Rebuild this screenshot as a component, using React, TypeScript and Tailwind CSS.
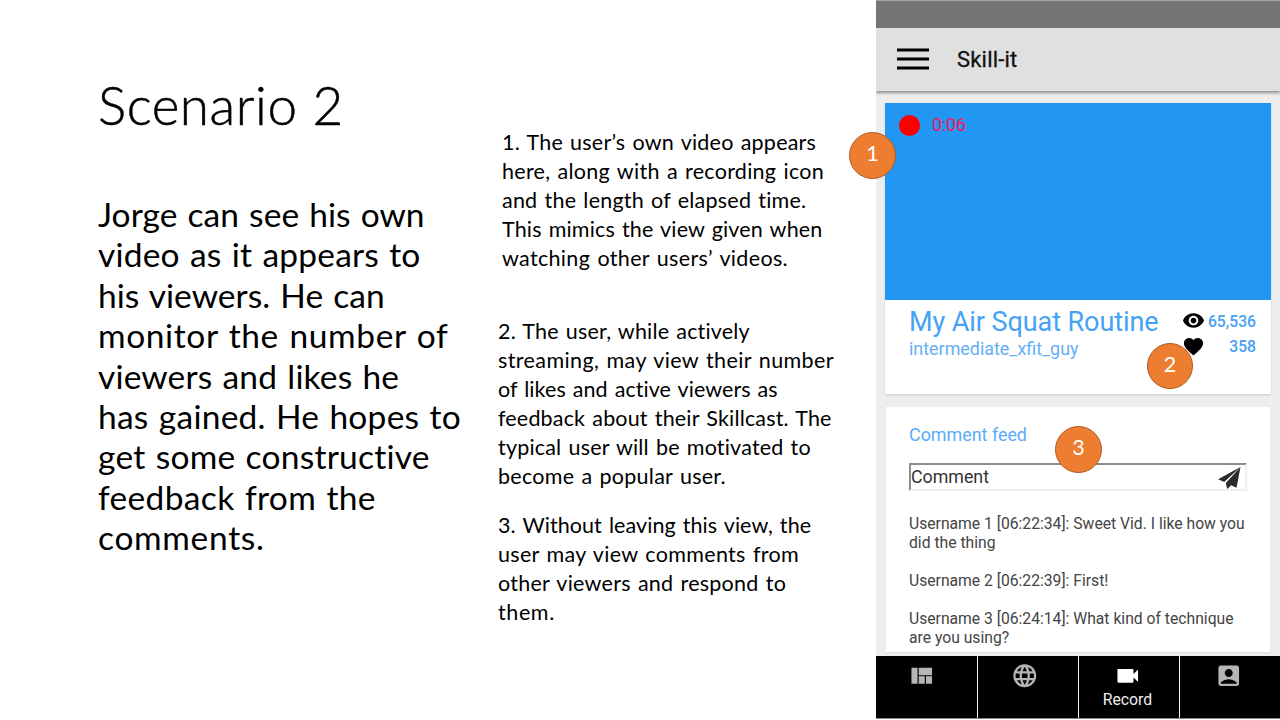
import type { ReactNode } from "react";
import { MdAccountBox, MdFavorite, MdLanguage, MdVideocam, MdViewQuilt, MdVisibility } from "react-icons/md";

function Line({ className = "", children }: { className?: string; children: ReactNode }) {
  return <span className={`block whitespace-pre ${className}`}>{children}</span>;
}

function Badge({ className, children }: { className: string; children: ReactNode }) {
  return (
    <div
      className={`absolute flex items-center justify-center rounded-full border border-[#ae5a21] bg-[#ed7d31] pb-[3px] font-[Lato,sans-serif] text-[21.5px] leading-none text-white ${className}`}
    >
      {children}
    </div>
  );
}

function Intro() {
  return (
    <section className="w-[400px] shrink-0 pt-[73px]">
      <h1 className="whitespace-pre text-[53px] leading-[64px] font-light tracking-[0.55px] [-webkit-text-stroke:0.5px_black]">
        Scenario 2
      </h1>
      <p className="mt-[57px] text-[33.5px] leading-[40.4px] [word-spacing:1.4px]">
        <Line className="tracking-[0.06px]">Jorge can see his own</Line>
        <Line className="tracking-[0.21px]">video as it appears to</Line>
        <Line className="tracking-[0.06px]">his viewers. He can</Line>
        <Line className="tracking-[0.62px]">monitor the number of</Line>
        <Line className="tracking-[0.17px]">viewers and likes he</Line>
        <Line className="tracking-[0.25px]">has gained. He hopes to</Line>
        <Line className="tracking-[0.24px]">get some constructive</Line>
        <Line className="tracking-[0.35px]">feedback from the</Line>
        <Line className="tracking-[0.7px]">comments.</Line>
      </p>
    </section>
  );
}

function Notes() {
  return (
    <section className="w-[350px] shrink-0 pt-[128px] text-[21.5px] leading-[28.9px] [word-spacing:1.4px]">
      <p className="pl-1">
        <Line className="tracking-[0.22px]">1. The user’s own video appears</Line>
        <Line className="tracking-[0.28px]">here, along with a recording icon</Line>
        <Line className="tracking-[0.22px]">and the length of elapsed time.</Line>
        <Line className="tracking-[0.16px]">This mimics the view given when</Line>
        <Line className="tracking-[0.33px]">watching other users’ videos.</Line>
      </p>
      <p className="mt-[44.6px]">
        <Line className="tracking-[0.18px]">2. The user, while actively</Line>
        <Line className="tracking-[0.39px]">streaming, may view their number</Line>
        <Line className="tracking-[0.07px]">of likes and active viewers as</Line>
        <Line className="tracking-[0.17px]">feedback about their Skillcast. The</Line>
        <Line className="tracking-[0.19px]">typical user will be motivated to</Line>
        <Line className="tracking-[0.26px]">become a popular user.</Line>
      </p>
      <p className="mt-[20.6px]">
        <Line className="tracking-[0.08px]">3. Without leaving this view, the</Line>
        <Line className="tracking-[0.32px]">user may view comments from</Line>
        <Line className="tracking-[0.25px]">other viewers and respond to</Line>
        <Line className="tracking-[0.6px]">them.</Line>
      </p>
    </section>
  );
}

function VideoCard() {
  return (
    <article className="mt-3 mr-[9px] ml-[9px] h-[291px] shrink-0 bg-white shadow-[0_1px_2px_rgba(0,0,0,0.14)]">
      <div className="flex h-[197px] items-start bg-[#2196f3] pt-[12px] pl-[14px]">
        <div className="size-[21px] rounded-full bg-[#ff0000]" />
        <span className="ml-[12px] text-[17.8px] leading-[19px] tracking-[-0.1px] text-[#f8175a]">0:06</span>
      </div>
      <div className="flex justify-between pr-[15px] pl-[24px] text-[#46a0f5]">
        <div>
          <h2 className="whitespace-pre pt-[6px] text-[27px] leading-[32px] tracking-[-0.08px] text-[#46a2f5]">My Air Squat Routine</h2>
          <p className="whitespace-pre text-[17.9px] leading-[22px] text-[#64aff7]">intermediate_xfit_guy</p>
        </div>
        <div className="w-[74px] pt-[9px] text-[15.7px] font-medium">
          <div className="flex h-[23px] items-center justify-between">
            <MdVisibility className="size-[23px] text-black" />
            <span className="pt-[2px]">65,536</span>
          </div>
          <div className="mt-[2px] flex h-[24px] items-center justify-between">
            <MdFavorite className="size-[23px] text-black" />
            <span className="pt-[2px]">358</span>
          </div>
        </div>
      </div>
    </article>
  );
}

function CommentCard() {
  return (
    <article className="mx-[10px] mt-[13px] h-[245px] shrink-0 bg-white px-[23px] shadow-[0_1px_1px_rgba(0,0,0,0.05)]">
      <h3 className="pt-[18px] text-[17.9px] leading-[20px] text-[#5aabf7]">Comment feed</h3>
      <div className="mt-[18px] flex h-[28px] w-[338px] items-center justify-between border-2 border-t-[#8c8c8c] border-r-[#eeeeee] border-b-[#eeeeee] border-l-[#8c8c8c] pr-[4px] text-[17.8px] text-[#333333]">
        <span className="pt-px">Comment</span>
        <svg viewBox="55 36 68 66" className="mt-[2px] h-[22px] w-[23px]" fill="#2b2b2b">
          <path d="M55 73 122 36 73 81Z" />
          <path d="M122 36 110 98 94 91 82 102 78 84Z" />
        </svg>
      </div>
      <div className="mt-[23px] text-[15.7px] leading-[19px] text-[#444444]">
        <Line>Username 1 [06:22:34]: Sweet Vid. I like how you</Line>
        <Line>did the thing</Line>
        <Line className="mt-[19px]">Username 2 [06:22:39]: First!</Line>
        <Line className="mt-[19px]">Username 3 [06:24:14]: What kind of technique</Line>
        <Line>are you using?</Line>
      </div>
    </article>
  );
}

function NavBar() {
  return (
    <nav className="mt-1 grid h-[63px] shrink-0 grid-cols-[101px_100px_100px_100px] gap-px border-b border-[#8a8a8a] bg-[#f4f4f4] text-[27.5px] text-[#b5b5b5]">
      <div className="flex justify-center bg-black pt-[6px] pr-[10.5px]"><MdViewQuilt /></div>
      <div className="flex justify-center bg-black pt-[6px] pr-[7.5px]"><MdLanguage /></div>
      <div className="flex flex-col items-center bg-black pt-[6px] pr-[3px] text-white">
        <MdVideocam />
        <span className="text-[15.8px] leading-[19px] text-[#eeeeee]">Record</span>
      </div>
      <div className="flex justify-center bg-black pt-[6px] pr-[3px]"><MdAccountBox /></div>
    </nav>
  );
}

export default function App() {
  return (
    <main className="relative flex h-[720px] w-[1280px] overflow-hidden bg-white pl-[98px] font-[Lato,sans-serif] text-black">
      <Intro />
      <Notes />
      <div className="ml-[28px] flex h-[719px] w-[404px] shrink-0 flex-col overflow-hidden bg-[#ededed] font-[Roboto,sans-serif]">
        <div className="h-[28px] shrink-0 border-t border-[#a3a3a3] bg-[#757575]" />
        <header className="flex h-[63px] shrink-0 items-center bg-[#e0e0e0] pl-[21px] shadow-[0_2px_3px_rgba(0,0,0,0.4)]">
          <svg viewBox="0 0 32 22" className="mb-[2px] h-[22px] w-[32px]" fill="none" stroke="black" strokeWidth="3.2">
            <path d="M0 2H32M0 11H32M0 20H32" />
          </svg>
          <span className="ml-[28px] text-[22px] tracking-[0.2px] text-[#111111] [-webkit-text-stroke:0.3px_#111111]">Skill-it</span>
        </header>
        <VideoCard />
        <CommentCard />
        <NavBar />
      </div>
      <Badge className="top-[132px] left-[849px] size-[47px]">1</Badge>
      <Badge className="top-[343px] left-[1147px] size-[46px]">2</Badge>
      <Badge className="top-[426px] left-[1055px] size-[47px]">3</Badge>
    </main>
  );
}
